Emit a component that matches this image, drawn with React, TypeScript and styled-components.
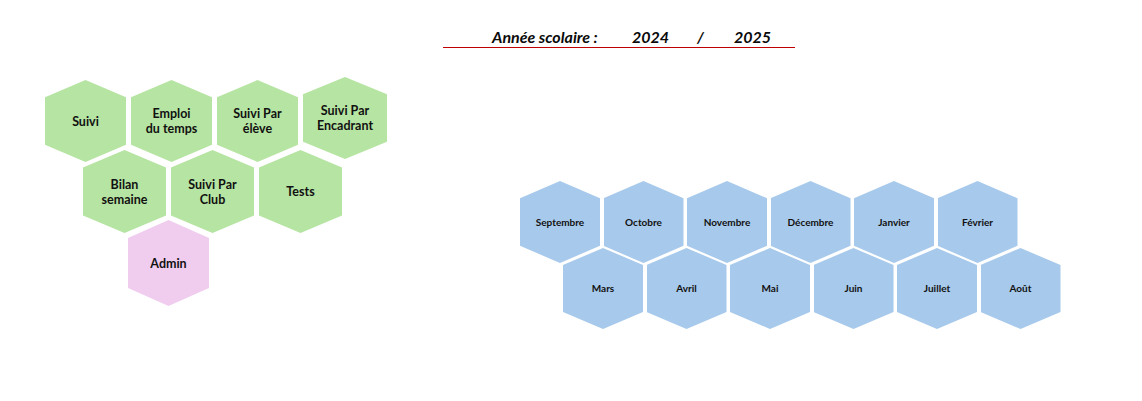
import React from 'react';
import styled, { createGlobalStyle } from 'styled-components';

const GlobalStyle = createGlobalStyle`
  html, body {
    margin: 0;
    padding: 0;
    background: #ffffff;
  }
  body {
    font-family: Lato, "Open Sans", sans-serif;
    color: #111111;
  }
`;

const Page = styled.div`
  width: 1142px;
  height: 401px;
  display: flex;
  flex-direction: column;
  overflow: hidden;
`;

const Header = styled.div`
  display: flex;
  margin: 26px 0 0 443px;
  width: 352px;
  border-bottom: 1px solid #c00000;
  padding-left: 49px;
  box-sizing: border-box;
  font-size: 16px;
  font-weight: 700;
  font-style: italic;
  line-height: 21px;
  color: #0a0a0a;
`;

const HeaderCell = styled.span<{ $w?: number }>`
  width: ${(p) => (p.$w ? `${p.$w}px` : 'auto')};
  flex: none;
  white-space: nowrap;
`;

const Main = styled.div`
  display: flex;
  align-items: flex-start;
  padding-left: 45px;
`;

const Panel = styled.div<{ $top: number; $left?: number }>`
  display: flex;
  flex-direction: column;
  margin-top: ${(p) => p.$top}px;
  margin-left: ${(p) => p.$left ?? 0}px;
`;

const HexRow = styled.div<{ $indent?: number; $overlap?: number; $gap: number }>`
  display: flex;
  align-items: flex-start;
  gap: ${(p) => p.$gap}px;
  margin-left: ${(p) => p.$indent ?? 0}px;
  margin-top: ${(p) => -(p.$overlap ?? 0)}px;
`;

const Hex = styled.div<{ $bg: string; $w: number; $h: number; $fs: number; $shift?: number }>`
  width: ${(p) => p.$w}px;
  height: ${(p) => p.$h}px;
  flex: none;
  background: ${(p) => p.$bg};
  clip-path: polygon(50% 0, 100% 21%, 100% 79%, 50% 100%, 0 79%, 0 21%);
  display: flex;
  align-items: center;
  justify-content: center;
  text-align: center;
  font-weight: 700;
  font-size: ${(p) => p.$fs}px;
  line-height: ${(p) => (p.$fs > 11 ? 15 : 13)}px;
  color: #111111;
  transform: translateY(${(p) => p.$shift ?? 0}px);
`;

const GREEN = '#b6e4a2';
const BLUE = '#a7c9eb';
const PINK = '#f0cdef';

type Cell = { label: React.ReactNode; shift?: number };

const greenTop: Cell[] = [
  { label: 'Suivi' },
  { label: <>Emploi<br />du temps</> },
  { label: <>Suivi Par<br />élève</> },
  { label: <>Suivi Par<br />Encadrant</>, shift: -3 },
];

const greenBottom: Cell[] = [
  { label: <>Bilan<br />semaine</> },
  { label: <>Suivi Par<br />Club</> },
  { label: 'Tests' },
];

const monthsTop = ['Septembre', 'Octobre', 'Novembre', 'Décembre', 'Janvier', 'Février'];
const monthsBottom = ['Mars', 'Avril', 'Mai', 'Juin', 'Juillet', 'Août'];

const App: React.FC = () => {
  return (
    <Page>
      <GlobalStyle />
      <Header>
        <HeaderCell $w={140}>Année scolaire :</HeaderCell>
        <HeaderCell $w={65}>2024</HeaderCell>
        <HeaderCell $w={37}>/</HeaderCell>
        <HeaderCell>2025</HeaderCell>
      </Header>
      <Main>
        {/* Left menu: navigation hexes */}
        <Panel $top={32}>
          <HexRow $gap={5}>
            {greenTop.map((c, i) => (
              <Hex key={i} $bg={GREEN} $w={i === 3 ? 84 : 81} $h={82} $fs={12.5} $shift={c.shift}>
                {c.label}
              </Hex>
            ))}
          </HexRow>
          <HexRow $gap={5} $indent={38} $overlap={12}>
            {greenBottom.map((c, i) => (
              <Hex key={i} $bg={GREEN} $w={83} $h={83} $fs={12.5}>
                {c.label}
              </Hex>
            ))}
          </HexRow>
          <HexRow $gap={5} $indent={83} $overlap={13}>
            <Hex $bg={PINK} $w={81} $h={86} $fs={12.5}>
              Admin
            </Hex>
          </HexRow>
        </Panel>

        {/* Right: months */}
        <Panel $top={133} $left={133}>
          <HexRow $gap={3.5}>
            {monthsTop.map((m) => (
              <Hex key={m} $bg={BLUE} $w={80} $h={82} $fs={10}>
                {m}
              </Hex>
            ))}
          </HexRow>
          <HexRow $gap={3.5} $indent={43} $overlap={15}>
            {monthsBottom.map((m) => (
              <Hex key={m} $bg={BLUE} $w={80} $h={81} $fs={10}>
                {m}
              </Hex>
            ))}
          </HexRow>
        </Panel>
      </Main>
    </Page>
  );
};

export default App;
